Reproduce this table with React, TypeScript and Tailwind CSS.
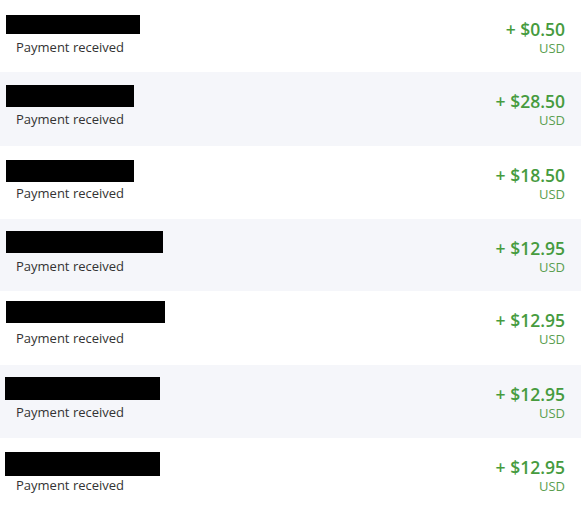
const rows = [
  { h: 72, barTop: 15, barH: 19, barW: 134, barX: 6, amount: "0.50" },
  { h: 74, barTop: 13, barH: 22, barW: 128, barX: 6, amount: "28.50" },
  { h: 73, barTop: 14, barH: 22, barW: 128, barX: 6, amount: "18.50" },
  { h: 72, barTop: 12, barH: 22, barW: 157, barX: 6, amount: "12.95" },
  { h: 74, barTop: 10, barH: 22, barW: 159, barX: 6, amount: "12.95" },
  { h: 73, barTop: 12, barH: 23, barW: 155, barX: 5, amount: "12.95" },
  { h: 70, barTop: 14, barH: 24, barW: 155, barX: 5, amount: "12.95" },
];

const App = () => {
  return (
    <div className="w-[581px] bg-white font-['Open_Sans',sans-serif]">
      {rows.map((row, i) => (
        <div
          key={i}
          className={`flex justify-between pr-4 ${i % 2 === 1 ? "bg-[#f5f6fa]" : "bg-white"}`}
          style={{ height: row.h }}
        >
          <div className="flex flex-col">
            {/* redacted name */}
            <div className="h-[38px]">
              <div
                className="bg-black"
                style={{ marginTop: row.barTop, marginLeft: row.barX, width: row.barW, height: row.barH }}
              />
            </div>
            <p className="pl-4 text-[13px] leading-[18px] text-[#333]">Payment received</p>
          </div>
          <div className="flex flex-col items-end pt-[17px]">
            <span className="text-[17.5px] leading-[24px] font-semibold text-[#469b3e]">+ ${row.amount}</span>
            <span className="text-[13px] leading-[14px] text-[#5a9e51]">USD</span>
          </div>
        </div>
      ))}
    </div>
  );
};

export default App;
